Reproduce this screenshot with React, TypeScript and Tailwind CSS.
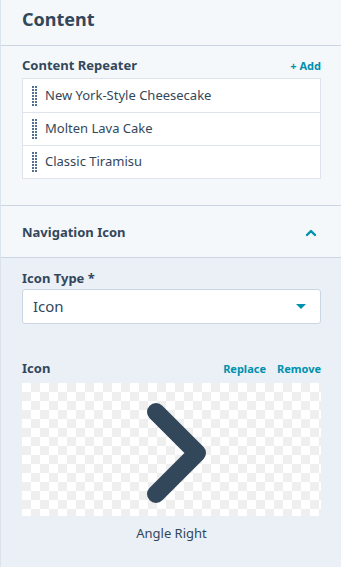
import React from 'react';

const items = ['New York-Style Cheesecake', 'Molten Lava Cake', 'Classic Tiramisu'];

const DragHandle = () => (
  <svg width="6" height="20" viewBox="0 0 6 20" className="shrink-0">
    {[0, 1, 2, 3, 4, 5, 6].map((r) => (
      <React.Fragment key={r}>
        <rect x="0" y={r * 3} width="2" height="2" fill="#516f90" />
        <rect x="3" y={r * 3} width="2" height="2" fill="#516f90" />
      </React.Fragment>
    ))}
  </svg>
);

export default function App() {
  return (
    <div
      className="w-[341px] h-[567px] overflow-hidden border-l border-[#dbe3ec] bg-[#f5f8fa] text-[#33475b] flex flex-col"
      style={{ fontFamily: '"Noto Sans", Lato, sans-serif' }}
    >
      {/* Header */}
      <div className="h-[46px] border-b border-[#cbd6e2] pl-[21px] pr-[20px] flex items-center">
        <h1 className="text-[18px] font-bold leading-none -mt-[8px]">Content</h1>
      </div>

      {/* Content repeater */}
      <div className="pl-[21px] pr-[20px] pt-[12px] pb-[26px]">
        <div className="flex items-center justify-between h-[16px] mb-[4px]">
          <span className="text-[13px] font-bold">Content Repeater</span>
          <button className="text-[11px] font-bold text-[#0091ae]">+ Add</button>
        </div>
        <div className="border border-[#dfe3eb] bg-white">
          {items.map((item, i) => (
            <div
              key={item}
              className={`h-[33px] flex items-center gap-[7px] pl-[9px] ${i > 0 ? 'border-t border-[#dfe3eb]' : ''}`}
            >
              <DragHandle />
              <span className="text-[13px] text-[#33475b]">{item}</span>
            </div>
          ))}
        </div>
      </div>

      {/* Navigation icon section header */}
      <div className="h-[53px] border-t border-b border-[#cbd6e2] pl-[21px] pr-[20px] flex items-center justify-between">
        <span className="text-[13px] font-bold mt-[3px]">Navigation Icon</span>
        <svg width="12" height="8" viewBox="0 0 12 8" className="mr-[4px] mt-[2px]">
          <polyline points="2,6 6,2 10,6" fill="none" stroke="#0091ae" strokeWidth="2.4" strokeLinecap="round" strokeLinejoin="round" />
        </svg>
      </div>

      {/* Navigation icon body */}
      <div className="flex-1 bg-[#eaf0f6] pl-[21px] pr-[20px] pt-[12px]">
        <label className="block text-[13px] font-bold h-[16px] leading-[16px]">Icon Type *</label>
        <div className="mt-[3px] h-[35px] rounded-[3px] border border-[#cbd6e2] bg-white flex items-center justify-between pl-[10px] pr-[14px]">
          <span className="text-[15px] text-[#33475b]">Icon</span>
          <svg width="10" height="6" viewBox="0 0 10 6">
            <polygon points="0,0 10,0 5,5" fill="#0091ae" />
          </svg>
        </div>

        <div className="mt-[37px] flex items-center justify-between h-[16px]">
          <span className="text-[13px] font-bold">Icon</span>
          <div className="flex gap-[11px] text-[11px] font-bold text-[#0091ae]">
            <button>Replace</button>
            <button>Remove</button>
          </div>
        </div>

        <div className="mt-[6px] h-[133px] flex items-start justify-center pt-[19px] pl-[10px] bg-white bg-[conic-gradient(#efefef_25%,#ffffff_0_50%,#efefef_0_75%,#ffffff_0)] bg-[length:18px_18px]">
          <svg width="60" height="102" viewBox="0 0 60 102">
            <polyline points="9,10 50,51 9,92" fill="none" stroke="#33475b" strokeWidth="18" strokeLinecap="round" strokeLinejoin="round" />
          </svg>
        </div>

        <p className="mt-[8px] text-center text-[13px] text-[#33475b]">Angle Right</p>
      </div>
    </div>
  );
}
